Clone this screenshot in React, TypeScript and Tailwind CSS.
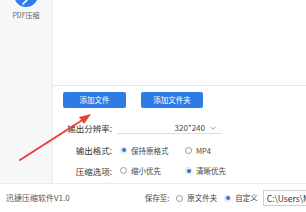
import React from "react";

const font = { fontFamily: '"Noto Sans CJK SC", "Liberation Sans", sans-serif' };

function Radio({ checked, label }: { checked?: boolean; label: string }) {
  return (
    <div className="flex items-center gap-[4px]">
      {checked ? (
        <span className="flex h-[7px] w-[7px] items-center justify-center rounded-full border border-[#c9d8f3] bg-white">
          <span className="h-[4px] w-[4px] rounded-full bg-[#3a6fd0]" />
        </span>
      ) : (
        <span className="h-[7px] w-[7px] rounded-full border border-[#9a9a9a] bg-white" />
      )}
      <span className="text-[7.5px] leading-none text-[#444]">{label}</span>
    </div>
  );
}

function Row({ label, children }: { label: string; children: React.ReactNode }) {
  return (
    <div className="flex items-center">
      <div className="w-[62px] pr-[3px] text-right text-[8.5px] leading-none text-[#333]">{label}</div>
      <div className="flex items-center pl-[5px]">{children}</div>
    </div>
  );
}

export default function App() {
  return (
    <div className="relative flex h-[212px] w-[306px] flex-col overflow-hidden bg-white" style={font}>
      <div className="flex h-[183px] shrink-0">
        <div className="flex w-[53px] shrink-0 flex-col items-center border-r border-[#ebebeb] bg-[#f6f7f9]">
          <div className="relative -mt-[17px] flex h-[24px] w-[24px] items-center justify-center rounded-full bg-[#2f7cf0]">
            <svg width="24" height="24" viewBox="0 0 24 24" className="absolute inset-0">
              <path d="M9 21 L14 16" stroke="white" strokeWidth="1.6" strokeLinecap="round" />
            </svg>
          </div>
          <div className="mt-[5px] text-[7px] leading-none text-[#666]">PDF压缩</div>
        </div>
        <div className="flex flex-1 flex-col">
          <div className="h-[86px] shrink-0 border-b border-[#e6e6e6]" />
          <div className="flex gap-[15px] pl-[10px] pt-[6px]">
            <button className="flex h-[16px] w-[63px] items-center justify-center rounded-[2px] bg-[#2e7be6] text-[7.5px] text-white">
              添加文件
            </button>
            <button className="flex h-[16px] w-[62px] items-center justify-center rounded-[2px] bg-[#2e7be6] text-[7.5px] text-white">
              添加文件夹
            </button>
          </div>
          <div className="mt-[14px] flex flex-col gap-[12px]">
            <Row label="输出分辨率:">
              <div className="-ml-[3px] flex h-[12px] w-[105px] items-center justify-end border-b border-[#dcdcdc] pr-[6px]">
                <span className="text-[8px] leading-none text-[#444]">320*240</span>
                <svg width="6" height="4" viewBox="0 0 6 4" className="ml-[5px]">
                  <path d="M0.5 0.8 L3 3.2 L5.5 0.8" stroke="#777" strokeWidth="0.8" fill="none" />
                </svg>
              </div>
            </Row>
            <Row label="输出格式:">
              <div className="w-[65px]">
                <Radio checked label="保持原格式" />
              </div>
              <Radio label="MP4" />
            </Row>
            <Row label="压缩选项:">
              <div className="w-[65px]">
                <Radio label="缩小优先" />
              </div>
              <Radio checked label="清晰优先" />
            </Row>
          </div>
        </div>
      </div>
      <div className="flex flex-1 items-center border-t border-[#ececec] pl-[6px]">
        <span className="shrink-0 text-[8px] leading-none text-[#555]">迅捷压缩软件V1.0</span>
        <div className="ml-[75px] flex shrink-0 items-center gap-[7px]">
          <span className="text-[7.5px] leading-none text-[#444]">保存至:</span>
          <Radio label="原文件夹" />
          <Radio checked label="自定义" />
          <div className="-ml-[2px] flex h-[16px] w-[80px] items-center border border-[#cfcfcf] pl-[3px] text-[8.5px] leading-none text-[#333]">
            C:\Users\MI
          </div>
        </div>
      </div>
      <svg className="pointer-events-none absolute left-0 top-0" width="306" height="212" viewBox="0 0 306 212">
        <line x1="20" y1="160" x2="84" y2="119" stroke="#e8403a" strokeWidth="2" strokeLinecap="round" />
        <polygon points="91,114 79,117 84,124" fill="#e8403a" />
      </svg>
    </div>
  );
}
